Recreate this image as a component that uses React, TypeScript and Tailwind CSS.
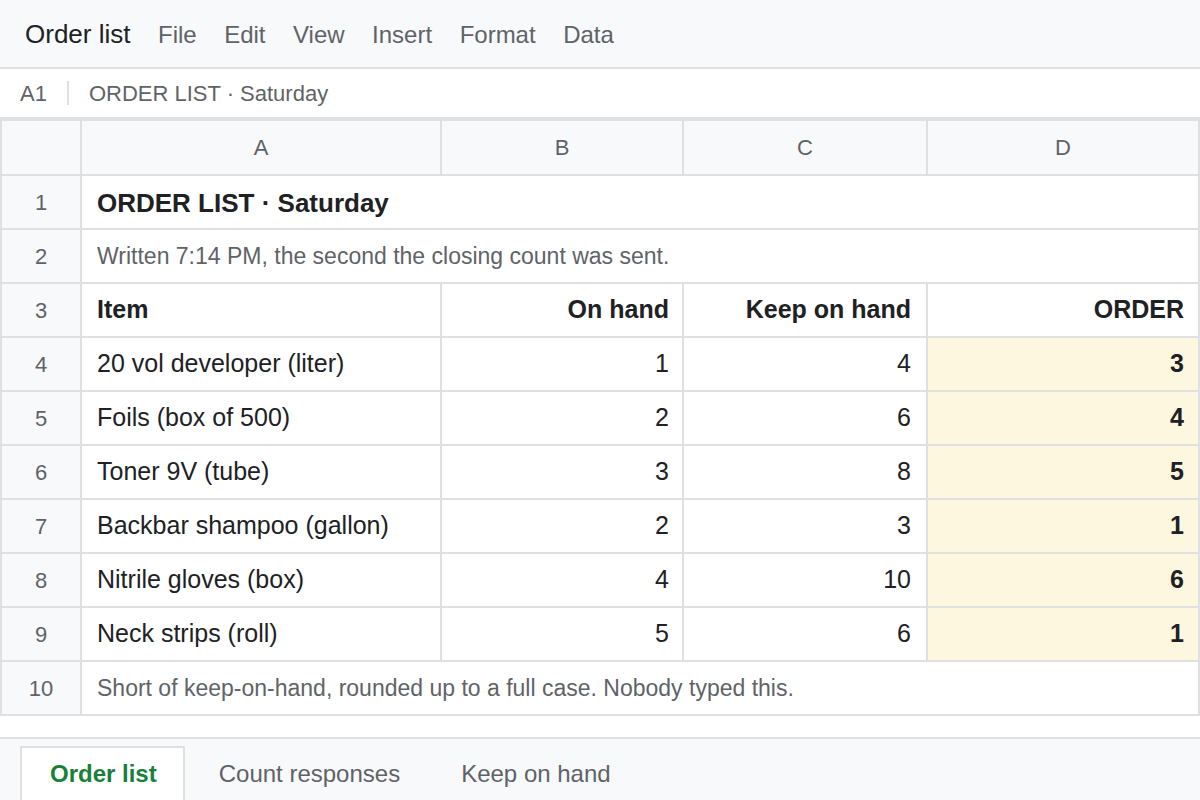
const menu = ["File", "Edit", "View", "Insert", "Format", "Data"];

const rows = [
  { n: 4, item: "20 vol developer (liter)", onHand: 1, keep: 4, order: 3 },
  { n: 5, item: "Foils (box of 500)", onHand: 2, keep: 6, order: 4 },
  { n: 6, item: "Toner 9V (tube)", onHand: 3, keep: 8, order: 5 },
  { n: 7, item: "Backbar shampoo (gallon)", onHand: 2, keep: 3, order: 1 },
  { n: 8, item: "Nitrile gloves (box)", onHand: 4, keep: 10, order: 6 },
  { n: 9, item: "Neck strips (roll)", onHand: 5, keep: 6, order: 1 },
];

function RowNum({ n }: { n: number }) {
  return (
    <div className="flex items-center justify-center bg-[#f8f9fa] text-[22px] text-[#5f6368]">
      {n}
    </div>
  );
}

export default function App() {
  return (
    <div className="flex h-[800px] flex-col overflow-hidden bg-white font-['Liberation_Sans',Arial,sans-serif] text-[#202124]">
      {/* menu bar */}
      <div className="flex h-[69px] shrink-0 items-center gap-[27.5px] border-b-2 border-[#e0e0e0] bg-[#f8f9fa] px-[25px] pt-[2px]">
        <span className="text-[26px] text-[#202124]">Order list</span>
        {menu.map((m) => (
          <span key={m} className="text-[24px] text-[#5f6368]">
            {m}
          </span>
        ))}
      </div>

      {/* formula bar */}
      <div className="flex h-[50px] shrink-0 items-center border-b-2 border-[#e0e0e0] px-[20px] text-[22px] text-[#5f6368]">
        <span>A1</span>
        <span className="mx-[20px] h-[24px] w-[2px] bg-[#e0e0e0]" />
        <span>ORDER LIST · Saturday</span>
      </div>

      {/* sheet */}
      <div className="grid shrink-0 grid-cols-[78px_358px_240px_242px_1fr] gap-[2px] bg-[#e0e0e0] p-[2px]">
        <div className="h-[53px] bg-[#f8f9fa]" />
        {["A", "B", "C", "D"].map((c) => (
          <div
            key={c}
            className="flex h-[53px] items-center justify-center bg-[#f8f9fa] text-[22px] text-[#5f6368]"
          >
            {c}
          </div>
        ))}

        <RowNum n={1} />
        <div className="col-span-4 flex h-[52px] items-center bg-white px-[15px] pt-[2px] text-[26px] font-bold">
          ORDER LIST · Saturday
        </div>

        <RowNum n={2} />
        <div className="col-span-4 flex h-[52px] items-center bg-white px-[15px] text-[23px] text-[#5f6368]">
          Written 7:14 PM, the second the closing count was sent.
        </div>

        <RowNum n={3} />
        <div className="flex h-[52px] items-center bg-white px-[15px] text-[25px] font-bold">Item</div>
        <div className="flex h-[52px] items-center justify-end bg-white px-[13px] text-[25px] font-bold">
          On hand
        </div>
        <div className="flex h-[52px] items-center justify-end bg-white px-[15px] text-[25px] font-bold">
          Keep on hand
        </div>
        <div className="flex h-[52px] items-center justify-end bg-white px-[14px] text-[25px] font-bold">
          ORDER
        </div>

        {rows.map((r) => (
          <>
            <RowNum key={`n${r.n}`} n={r.n} />
            <div key={`a${r.n}`} className="flex h-[52px] items-center bg-white px-[15px] text-[25px]">
              {r.item}
            </div>
            <div key={`b${r.n}`} className="flex h-[52px] items-center justify-end bg-white px-[13px] text-[25px]">
              {r.onHand}
            </div>
            <div key={`c${r.n}`} className="flex h-[52px] items-center justify-end bg-white px-[15px] text-[25px]">
              {r.keep}
            </div>
            <div
              key={`d${r.n}`}
              className="flex h-[52px] items-center justify-end bg-[#fef7e0] px-[14px] text-[25px] font-bold"
            >
              {r.order}
            </div>
          </>
        ))}

        <RowNum n={10} />
        <div className="col-span-4 flex h-[52px] items-center bg-white px-[15px] text-[23px] text-[#5f6368]">
          Short of keep-on-hand, rounded up to a full case. Nobody typed this.
        </div>
      </div>

      {/* sheet tabs */}
      <div className="mt-[21px] flex flex-1 items-start border-t-2 border-[#e0e0e0] bg-[#f8f9fa] px-[20px] pt-[7px]">
        <div className="border-2 border-b-0 border-[#e0e0e0] bg-white pr-[26px] pl-[28px] py-[12px] text-[24px] leading-[28px] font-bold text-[#188038]">
          Order list
        </div>
        <div className="ml-[34px] py-[14px] text-[24px] leading-[28px] text-[#5f6368]">Count responses</div>
        <div className="ml-[61px] py-[14px] text-[24px] leading-[28px] text-[#5f6368]">Keep on hand</div>
      </div>
    </div>
  );
}
